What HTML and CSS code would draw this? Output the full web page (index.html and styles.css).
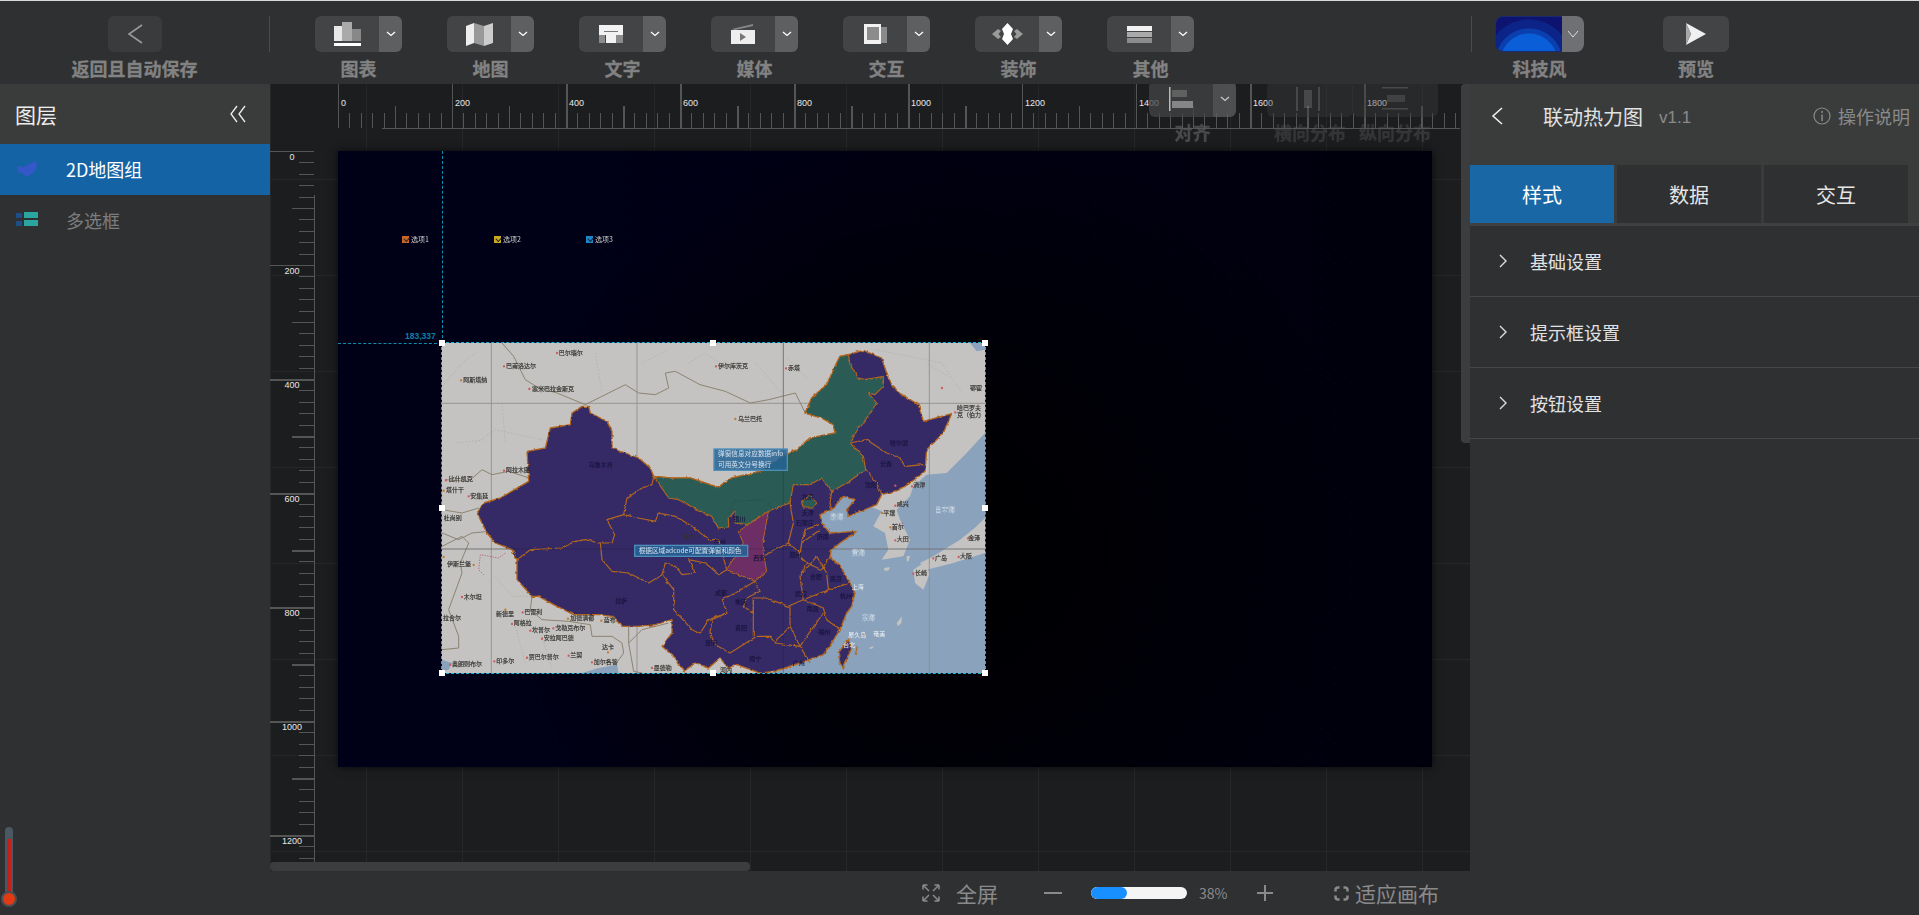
FILE: index.html
```html
<!DOCTYPE html>
<html lang="zh-CN">
<head>
  <meta charset="UTF-8">
  <title>联动热力图</title>
  <link rel="stylesheet" href="styles.css">
</head>
<body>

  <!-- top toolbar -->
  <header class="topbar">
    <div class="back-tool">
      <button class="tool-btn back-btn">
        <svg width="16" height="22" viewBox="0 0 16 22"><path d="M15 2 L2 11 L15 20" fill="none" stroke="#999" stroke-width="1.6"/></svg>
      </button>
      <span class="tool-label">返回且自动保存</span>
    </div>
    <div class="tool-sep"></div>
    <div class="tool-list">
      <div class="tool">
        <div class="split-btn">
          <span class="split-main">
            <svg width="27" height="24" viewBox="0 0 27 24"><rect x="0" y="4" width="8" height="15" fill="#e8e8e8"/><rect x="8" y="0" width="10" height="19" fill="#aaa"/><rect x="18" y="7" width="9" height="12" fill="#888"/><rect x="0" y="21" width="27" height="3" fill="#fff"/></svg>
          </span>
          <span class="split-caret"><svg class="caret" width="10" height="6" viewBox="0 0 10 6"><path d="M1 1 L5 4.5 L9 1" fill="none" stroke="#fff" stroke-width="1.3"/></svg></span>
        </div>
        <span class="tool-label">图表</span>
      </div>
      <div class="tool">
        <div class="split-btn">
          <span class="split-main">
            <svg width="27" height="23" viewBox="0 0 27 23"><path d="M0 3 L8 0 V20 L0 23 Z" fill="#eee"/><path d="M8 0 L18 3 V23 L8 20 Z" fill="#999"/><path d="M18 3 L27 0 V20 L18 23 Z" fill="#ccc"/></svg>
          </span>
          <span class="split-caret"><svg class="caret" width="10" height="6" viewBox="0 0 10 6"><path d="M1 1 L5 4.5 L9 1" fill="none" stroke="#fff" stroke-width="1.3"/></svg></span>
        </div>
        <span class="tool-label">地图</span>
      </div>
      <div class="tool">
        <div class="split-btn">
          <span class="split-main">
            <svg width="24" height="18" viewBox="0 0 24 18"><rect width="24" height="10" fill="#f2f2f2"/><rect y="10" width="6" height="8" fill="#8c8c8c"/><rect x="17" y="10" width="7" height="8" fill="#8c8c8c"/><rect x="5" y="6" width="14" height="1" fill="#777"/><rect x="7" y="7" width="10" height="11" fill="#f2f2f2"/></svg>
          </span>
          <span class="split-caret"><svg class="caret" width="10" height="6" viewBox="0 0 10 6"><path d="M1 1 L5 4.5 L9 1" fill="none" stroke="#fff" stroke-width="1.3"/></svg></span>
        </div>
        <span class="tool-label">文字</span>
      </div>
      <div class="tool">
        <div class="split-btn">
          <span class="split-main">
            <svg width="24" height="20" viewBox="0 0 24 20"><path d="M1 5 L22 0 V2 L4 6 Z" fill="#888"/><rect x="0" y="6" width="24" height="14" fill="#eee"/><path d="M9 9 L15 13 L9 17 Z" fill="#777"/></svg>
          </span>
          <span class="split-caret"><svg class="caret" width="10" height="6" viewBox="0 0 10 6"><path d="M1 1 L5 4.5 L9 1" fill="none" stroke="#fff" stroke-width="1.3"/></svg></span>
        </div>
        <span class="tool-label">媒体</span>
      </div>
      <div class="tool">
        <div class="split-btn">
          <span class="split-main">
            <svg width="23" height="20" viewBox="0 0 23 20"><rect x="8" y="3" width="15" height="16" fill="#8a8a8a"/><rect x="0" y="0" width="17" height="20" fill="#f2f2f2"/><rect x="3" y="3" width="12" height="13" fill="#8c8c8c"/></svg>
          </span>
          <span class="split-caret"><svg class="caret" width="10" height="6" viewBox="0 0 10 6"><path d="M1 1 L5 4.5 L9 1" fill="none" stroke="#fff" stroke-width="1.3"/></svg></span>
        </div>
        <span class="tool-label">交互</span>
      </div>
      <div class="tool">
        <div class="split-btn">
          <span class="split-main">
            <svg width="31" height="22" viewBox="0 0 31 22"><path d="M15.500 0 L21 6 L19 11 L21 16 L15.500 22 L10 16 L12 11 L10 6 Z" fill="#fff"/><path d="M6 6 L9 8 L6.500 11 L9 14 L6 16 L0 11 Z" fill="#9a9a9a"/><path d="M25 6 L22 8 L24.500 11 L22 14 L25 16 L31 11 Z" fill="#9a9a9a"/></svg>
          </span>
          <span class="split-caret"><svg class="caret" width="10" height="6" viewBox="0 0 10 6"><path d="M1 1 L5 4.5 L9 1" fill="none" stroke="#fff" stroke-width="1.3"/></svg></span>
        </div>
        <span class="tool-label">装饰</span>
      </div>
      <div class="tool">
        <div class="split-btn">
          <span class="split-main">
            <svg width="25" height="17" viewBox="0 0 25 17"><rect width="25" height="5" fill="#f2f2f2"/><rect y="6" width="25" height="5" fill="#aaa"/><rect y="12" width="25" height="5" fill="#8c8c8c"/></svg>
          </span>
          <span class="split-caret"><svg class="caret" width="10" height="6" viewBox="0 0 10 6"><path d="M1 1 L5 4.5 L9 1" fill="none" stroke="#fff" stroke-width="1.3"/></svg></span>
        </div>
        <span class="tool-label">其他</span>
      </div>
    </div>
    <div class="tool-sep right-sep"></div>
    <div class="tool theme-tool">
      <div class="theme-btn">
        <span class="theme-thumb"></span>
        <span class="theme-caret"><svg width="12" height="8" viewBox="0 0 12 8"><path d="M1 1 L6 7 L11 1" fill="none" stroke="#ddd" stroke-width="1"/></svg></span>
      </div>
      <span class="tool-label">科技风</span>
    </div>
    <div class="tool preview-tool">
      <button class="tool-btn preview-btn">
        <svg width="20" height="22" viewBox="0 0 20 22"><path d="M0 0 L20 11 L0 22 L5 11 Z" fill="#f0f0f0"/><path d="M0 0 L5 11 L0 22 Z" fill="#a8a8a8"/></svg>
      </button>
      <span class="tool-label">预览</span>
    </div>
  </header>

  <div class="workspace">

    <!-- layers -->
    <aside class="layers">
      <div class="layers-head">
        <span>图层</span>
        <svg width="18" height="18" viewBox="0 0 18 18"><path d="M8 1 L2 9 L8 17 M16 1 L10 9 L16 17" fill="none" stroke="#eee" stroke-width="1.3"/></svg>
      </div>
      <div class="layer-row active">
        <svg class="layer-icon" width="22" height="16" viewBox="0 0 22 16"><path d="M1 5 L8 6 L13 3 L20 0 L21 6 L17 12 L11 16 L6 12 L2 11 Z" fill="#3558c8"/></svg>
        <span>2D地图组</span>
      </div>
      <div class="layer-row">
        <svg class="layer-icon" width="22" height="15" viewBox="0 0 22 15"><rect y="1" width="6" height="5" fill="#1d4f86"/><rect y="9" width="6" height="5" fill="#1d4f86"/><rect x="8" y="0" width="14" height="6" fill="#2aa5a0"/><rect x="8" y="8" width="14" height="6" fill="#2aa5a0"/></svg>
        <span>多选框</span>
      </div>
      <div class="thermo"><span class="thermo-tube"><i></i></span><span class="thermo-bulb"></span></div>
    </aside>

    <!-- canvas area -->
    <main class="center">
      <div class="stage">
        <div class="ruler-x">
          <div class="ruler-x-ticks"></div>
          <div class="ruler-x-labels">
            <span>0</span><span>200</span><span>400</span><span>600</span><span>800</span><span>1000</span><span>1200</span><span>1400</span><span>1600</span><span>1800</span>
          </div>
        </div>
        <div class="ruler-y">
          <span>0</span><span>200</span><span>400</span><span>600</span><span>800</span><span>1000</span><span>1200</span>
        </div>

        <div class="screen">
          <label class="chk chk-1"><i class="orange"></i>选项1</label>
          <label class="chk chk-2"><i class="yellow"></i>选项2</label>
          <label class="chk chk-3"><i class="blue"></i>选项3</label>
          <div class="guide-v"></div>
          <div class="guide-h"></div>
          <span class="guide-text">183,337</span>

          <div class="map-box">
            <svg class="map" viewBox="0 0 1629 990" preserveAspectRatio="none">
              <defs>
                <filter id="rough" x="0" y="0" width="100%" height="100%">
                  <feTurbulence type="fractalNoise" baseFrequency="0.07" numOctaves="2" seed="4"/>
                  <feDisplacementMap in="SourceGraphic" scale="9" xChannelSelector="R" yChannelSelector="G"/>
                </filter>
              </defs>
              <rect width="1629" height="990" fill="#c4c3c1"/>
              <path class="faint" d="M0 130 L60 60 L100 30 M100 300 L160 260 L300 290 M180 180 L190 300 M600 60 L680 20 M460 30 L480 150 M740 60 L790 30 L830 60 M940 60 L1020 150 M1300 20 L1500 60 L1560 150 M1450 60 L1520 100 M40 300 L130 290 M1100 110 L1030 40 M160 700 L210 760 L290 760 M220 850 L250 960 M300 880 L330 980"/>
              <!-- sea -->
              <path class="sea" d="M1629 270 L1574 330 L1514 390 L1454 395 L1414 430 L1320 460 L1200 460 L1134 515 L1164 640 L1224 720 L1144 935 L1000 985 L990 990 L1629 990 Z"/>
              <path class="sea" d="M1584 0 L1629 0 L1629 20 L1604 25 Z"/>
              <path class="sea" d="M0 950 L30 960 L20 980 L0 985 Z"/>
              <path class="sea" d="M420 990 L470 975 L525 965 L530 990 Z"/>
              <!-- korea and japan -->
              <path class="land" d="M1414 430 L1374 440 L1319 460 L1284 490 L1319 505 L1294 550 L1329 570 L1339 620 L1319 650 L1384 640 L1404 590 L1374 530 L1364 500 L1404 460 Z"/>
              <path class="land" d="M1629 525 L1604 550 L1554 590 L1474 640 L1434 660 L1454 680 L1534 660 L1629 630 Z"/>
              <path class="land" d="M1414 680 L1444 660 L1464 690 L1444 740 L1419 720 Z"/>
              <path class="land" d="M1394 640 L1404 638 L1400 655 L1394 655 Z M1326 675 L1344 672 L1340 682 L1328 684 Z M1364 840 L1380 820 L1378 840 L1368 850 Z M1280 915 L1296 908 L1290 918 Z"/>
              <!-- grid -->
              <path class="grat" d="M0 181 H1629 M0 618 H1629 M148 0 V990 M585 0 V990 M1024 0 V990 M1462 0 V990"/>
              <!-- borders outside china -->
              <path class="border" d="M180 0 L215 40 L250 110 L290 135 L345 150 L430 185 L550 125 L590 150 L640 155 L680 135 L670 90 L700 85 L774 125 L850 145 L925 180 L980 170 L1060 150 L1090 210"/>
              <path class="border" d="M10 410 L80 415 L120 380 L150 395 L200 385 L262 405 M0 500 L60 510 L110 495 M0 570 L50 590 L90 570 L140 565 M0 610 L60 580 L80 600 L55 660 L60 690 L20 800 L50 880 L50 915 L0 920"/>
              <path class="border" d="M270 760 L265 800 L300 830 L380 835 L445 845 L450 880 L510 880 L540 900 L545 930 L520 965 M560 850 L560 900 L600 860 L680 840 M560 900 L575 985 L600 990 M725 985 L730 990"/>
              <path class="pinkline" d="M190 630 L170 645 L115 635 L110 680 L125 695 M1347 560 L1360 545 L1385 540"/>
              <!-- china -->
              <g filter="url(#rough)">
                <path class="china" d="M420 190 L440 190 L445 210 L495 235 L510 265 L510 315 L590 345 L625 375 L635 400 L690 405 L745 405 L820 430 L829 432 L869 405 L954 385 L1024 340 L1064 320 L1104 285 L1179 270 L1174 245 L1139 225 L1089 210 L1109 165 L1154 125 L1184 60 L1194 40 L1219 35 L1264 22 L1319 45 L1339 105 L1364 145 L1429 185 L1444 235 L1529 212 L1504 270 L1454 320 L1449 385 L1404 420 L1374 440 L1319 455 L1304 485 L1244 510 L1219 520 L1214 500 L1239 470 L1204 460 L1169 500 L1134 515 L1139 540 L1164 570 L1244 565 L1194 600 L1169 620 L1164 640 L1194 670 L1224 720 L1239 750 L1229 790 L1214 810 L1194 860 L1169 900 L1144 935 L1074 960 L999 985 L954 990 L884 965 L859 975 L834 945 L800 975 L760 960 L725 985 L700 945 L660 910 L690 870 L690 830 L640 845 L590 850 L540 850 L510 820 L470 815 L395 815 L335 785 L290 760 L270 760 L225 710 L225 650 L210 620 L160 600 L135 570 L105 510 L125 480 L175 465 L260 415 L255 325 L310 315 L325 255 L385 245 L390 210 Z"/>
                <path class="green" d="M635 400 L690 405 L745 405 L820 430 L829 432 L869 405 L954 385 L1024 340 L1064 320 L1104 285 L1179 270 L1174 245 L1139 225 L1089 210 L1109 165 L1154 125 L1184 60 L1194 40 L1219 35 L1224 65 L1249 105 L1271 110 L1324 100 L1324 130 L1299 155 L1279 150 L1304 180 L1264 240 L1244 265 L1224 300 L1264 340 L1271 380 L1214 420 L1169 445 L1139 405 L1104 425 L1054 425 L1044 480 L989 500 L914 545 L879 540 L879 505 L859 525 L860 552 L829 555 L809 520 L774 505 L710 470 L680 465 Z"/>
                <path class="green" d="M1104 455 L1124 480 L1114 495 L1084 495 L1079 475 Z"/>
                <path class="shaanxi" d="M979 505 L964 590 L964 630 L974 685 L939 715 L854 680 L879 640 L904 600 L889 565 L919 545 Z"/>
                <path class="prov" d="M635 400 L630 425 L600 435 L555 465 L545 515 L495 530 L518 575 L510 600 L470 600 L430 590 L400 595 L360 615 L265 620 L225 650"/>
                <path class="prov" d="M545 515 L590 525 L640 535 L650 510 L700 520 L750 550 L800 590 L830 590 L854 680"/>
                <path class="prov" d="M475 600 L480 650 L510 685 L560 690 L620 720 L660 695 L670 660 L700 670 L720 695 L760 690 L740 650 L790 660 L830 695 L854 680"/>
                <path class="prov" d="M660 695 L695 740 L695 800 L750 860 L775 870 L800 830 L855 810 L840 770 L880 750 L939 715"/>
                <path class="prov" d="M855 810 L810 830 L804 870 L820 905 L864 930 L944 880 L984 880 L999 900 L1074 910 L1104 960"/>
                <path class="prov" d="M939 715 L954 745 L914 765 L904 790 L934 810 L934 765 L974 765 L1039 790 L1084 770 L1074 700 L1094 660 L1139 680 L1164 640"/>
                <path class="prov" d="M964 640 L1039 600 L1074 630 L1079 600 L1134 560 M1044 480 L1054 540 L1039 600 M1079 600 L1089 560 L1134 545 M1094 660 L1074 640 L1079 600"/>
                <path class="prov" d="M1169 445 L1164 480 L1169 500 M1271 380 L1304 420 L1319 455 M1224 300 L1274 290 L1334 330 L1374 345 L1389 370 L1444 365"/>
                <path class="prov" d="M1044 790 L1044 850 L1004 890 L999 900 M1084 770 L1144 795 L1154 830 L1194 860 M1044 850 L1074 910 L1094 880 L1144 810 M934 765 L934 880 M1074 700 L1124 640 L1154 690 L1159 740 L1224 720 M1084 770 L1159 740"/>
                <path class="prov-thin" d="M874 475 L960 470 L989 490 L985 510 M874 475 L860 525"/>
                <!-- taiwan -->
                <path class="china" d="M1219 890 L1189 930 L1194 960 L1204 975 L1229 915 Z"/>
                <path class="prov" d="M1246 910 L1240 935"/>
              </g>
              <path class="grat-over" d="M0 618 H1629 M1024 0 V990"/>
              <!-- city dots -->
              <path class="dots" d="M345 30h0 M186 70h0 M262 138h0 M186 383h0 M12 412h0 M80 460h0 M242 808h0 M210 843h0 M265 863h0 M334 856h0 M300 887h0 M380 938h0 M255 944h0 M157 955h0 M25 965h0 M450 958h0 M630 975h0 M60 762h0 M822 70h0 M1032 76h0 M1360 428h0 M1500 135h0 M1540 208h0 M1410 430h0 M1360 488h0 M1360 592h0 M1578 586h0 M1474 646h0 M1550 642h0 M1414 692h0"/>
              <path class="dots-o" d="M57 112h0 M5 443h0 M95 666h0 M5 642h0 M190 800h0 M378 827h0 M478 833h0 M498 928h0 M880 228h0 M1320 510h0 M1345 553h0 M1265 877h0"/>
              <!-- place names -->
              <g class="m">
                <text x="350" y="35">巴尔瑙尔</text><text x="192" y="75">巴甫洛达尔</text><text x="64" y="117">阿斯塔纳</text><text x="270" y="143">塞米巴拉金斯克</text><text x="828" y="75">伊尔库茨克</text><text x="1038" y="82">赤塔</text><text x="888" y="233">乌兰巴托</text><text x="1584" y="140">鄂霍</text><text x="1545" y="202">哈巴罗夫</text><text x="1545" y="222">克（伯力</text><text x="192" y="387">阿拉木图</text><text x="20" y="415">比什凯克</text><text x="12" y="448">塔什干</text><text x="85" y="464">安集延</text><text x="5" y="532">杜尚别</text><text x="15" y="670">伊斯兰堡</text><text x="65" y="767">木尔坦</text><text x="3" y="832">拉合尔</text><text x="162" y="820">新德里</text><text x="247" y="813">巴雷利</text><text x="215" y="847">阿格拉</text><text x="270" y="868">坎普尔</text><text x="340" y="860">戈勒克布尔</text><text x="305" y="892">安拉阿巴德</text><text x="385" y="832">加德满都</text><text x="485" y="838">蓝布</text><text x="480" y="918">达卡</text><text x="385" y="943">兰契</text><text x="260" y="948">贾巴尔普尔</text><text x="163" y="960">印多尔</text><text x="30" y="970">奥朗则布尔</text><text x="455" y="963">加尔各答</text><text x="635" y="980">曼德勒</text><text x="722" y="588">西宁</text><text x="834" y="986">河内</text><text x="1414" y="433">清津</text><text x="1364" y="490">咸兴</text><text x="1324" y="516">平壤</text><text x="1349" y="558">首尔</text><text x="1364" y="595">大田</text><text x="1579" y="592">金泽</text><text x="1479" y="650">广岛</text><text x="1554" y="646">大阪</text><text x="1419" y="697">长崎</text>
              </g>
              <g class="d">
                <text x="440" y="372">乌鲁木齐</text><text x="520" y="780">拉萨</text><text x="815" y="603">兰州</text><text x="1344" y="305">哈尔滨</text><text x="1314" y="370">长春</text><text x="1269" y="433">沈阳</text><text x="1079" y="468">北京</text><text x="1079" y="515">天津</text><text x="1062" y="546">石家庄</text><text x="1124" y="587">济南</text><text x="1042" y="642">郑州</text><text x="934" y="652">西安</text><text x="874" y="533">银川</text><text x="1104" y="708">合肥</text><text x="1164" y="715">南京</text><text x="1194" y="765">杭州</text><text x="1059" y="758">武汉</text><text x="819" y="757">成都</text><text x="879" y="783">重庆</text><text x="1094" y="805">南昌</text><text x="879" y="860">贵阳</text><text x="1129" y="873">福州</text><text x="789" y="905">昆明</text><text x="922" y="955">南宁</text><text x="1052" y="967">广州</text>
              </g>
              <g class="w">
                <text x="1229" y="738">上海</text><text x="1204" y="913">台北</text><text x="1219" y="882">屋久岛</text><text x="1294" y="878">奄美</text>
              </g>
              <g class="sea-name">
                <text x="1479" y="506">日本海</text><text x="1164" y="527">渤海</text><text x="1229" y="637">黄海</text><text x="1259" y="832">东海</text>
              </g>
              <!-- tooltips -->
              <rect class="tip" x="816" y="318" width="220" height="64"/>
              <text class="tip-text" x="828" y="340">弹窗信息对应数据info</text>
              <text class="tip-text" x="828" y="372">可用英文分号换行</text>
              <rect class="tip" x="578" y="607" width="339" height="33"/>
              <text class="tip-text" x="590" y="630">根据区域adcode可配置弹窗和颜色</text>
            </svg>
            <span class="handle tl"></span><span class="handle tc"></span><span class="handle tr"></span>
            <span class="handle ml"></span><span class="handle mr"></span>
            <span class="handle bl"></span><span class="handle bc"></span><span class="handle br"></span>
          </div>
        </div>

        <!-- align buttons sit on top of the ruler -->
        <div class="float-tool align-tool">
          <div class="split-btn">
            <span class="split-main">
              <svg width="24" height="24" viewBox="0 0 24 24"><rect width="1.500" height="24" fill="#eee"/><rect x="3" y="3" width="15" height="7" fill="#777"/><rect x="3" y="14" width="21" height="7" fill="#aaa"/></svg>
            </span>
            <span class="split-caret"><svg class="caret" width="10" height="6" viewBox="0 0 10 6"><path d="M1 1 L5 4.5 L9 1" fill="none" stroke="#fff" stroke-width="1.3"/></svg></span>
          </div>
          <span class="float-label">对齐</span>
        </div>
        <div class="float-tool dist-x">
          <div class="dist-btn">
            <svg width="28" height="24" viewBox="0 0 28 24"><rect x="0" y="0" width="2" height="24" fill="#888"/><rect x="8" y="3" width="8" height="18" fill="#888"/><rect x="22" y="0" width="2" height="24" fill="#888"/></svg>
          </div>
          <span class="float-label">横向分布</span>
        </div>
        <div class="float-tool dist-y">
          <div class="dist-btn">
            <svg width="26" height="24" viewBox="0 0 26 24"><rect y="0" width="26" height="1.500" fill="#888"/><rect x="5" y="8" width="18" height="7" fill="#777"/><rect y="21" width="26" height="1.500" fill="#888"/></svg>
          </div>
          <span class="float-label">纵向分布</span>
        </div>

        <div class="scroll-x"></div>
        <div class="scroll-y"></div>
      </div>

      <footer class="zoombar">
        <svg class="zoom-full" width="18" height="18" viewBox="0 0 18 18"><path d="M1 1 L7 7 M1 1 H5.500 M1 1 V5.500 M17 1 L11 7 M17 1 H12.500 M17 1 V5.500 M1 17 L7 11 M1 17 H5.500 M1 17 V12.500 M17 17 L11 11 M17 17 H12.500 M17 17 V12.500" fill="none" stroke="#8a8a8a" stroke-width="1.500"/></svg>
        <span class="zoom-text full-text">全屏</span>
        <span class="zoom-minus"></span>
        <div class="zoom-slider"><div class="zoom-fill" style="width: 38%"></div></div>
        <span class="zoom-pct">38%</span>
        <span class="zoom-plus"></span>
        <svg class="zoom-fit" width="15" height="15" viewBox="0 0 15 15"><path d="M1.500 5.500 V4 Q1.500 1.500 4 1.500 H5.500 M9.500 1.500 H11 Q13.500 1.500 13.500 4 V5.500 M13.500 9.500 V11 Q13.500 13.500 11 13.500 H9.500 M5.500 13.500 H4 Q1.500 13.500 1.500 11 V9.500" fill="none" stroke="#8a8a8a" stroke-width="2.500"/></svg>
        <span class="zoom-text">适应画布</span>
      </footer>
    </main>

    <!-- settings -->
    <aside class="props">
      <div class="props-head">
        <svg width="14" height="20" viewBox="0 0 14 20"><path d="M12 2 L3 10 L12 18" fill="none" stroke="#eee" stroke-width="1.600"/></svg>
        <span class="props-title">联动热力图</span>
        <span class="props-ver">v1.1</span>
        <span class="props-help">
          <svg width="18" height="18" viewBox="0 0 18 18"><circle cx="9" cy="9" r="8" fill="none" stroke="#888" stroke-width="1.200"/><rect x="8.300" y="4" width="1.500" height="2" fill="#888"/><rect x="8.300" y="7.500" width="1.500" height="6.500" fill="#888"/></svg>
          操作说明
        </span>
      </div>
      <div class="tabs">
        <span class="tab active">样式</span>
        <span class="tab">数据</span>
        <span class="tab">交互</span>
      </div>
      <div class="acc-row"><svg width="10" height="16" viewBox="0 0 10 16"><path d="M2 2 L8 8 L2 14" fill="none" stroke="#ddd" stroke-width="1.400"/></svg>基础设置</div>
      <div class="acc-row"><svg width="10" height="16" viewBox="0 0 10 16"><path d="M2 2 L8 8 L2 14" fill="none" stroke="#ddd" stroke-width="1.400"/></svg>提示框设置</div>
      <div class="acc-row"><svg width="10" height="16" viewBox="0 0 10 16"><path d="M2 2 L8 8 L2 14" fill="none" stroke="#ddd" stroke-width="1.400"/></svg>按钮设置</div>
    </aside>
  </div>

</body>
</html>
```

FILE: styles.css
```css
* {
  margin: 0;
  padding: 0;
  box-sizing: border-box;
}
html, body {
  height: 100%;
  overflow: hidden;
  font-family: "Noto Sans CJK SC", "Liberation Sans", sans-serif;
  background: #2f3032;
}
body {
  display: flex;
  flex-direction: column;
}

/* top toolbar */
.topbar {
  height: 84px;
  flex: none;
  display: flex;
  padding-top: 15px;
  border-top: 1px solid #d8d8d8;
  background: #2f3032;
}
.back-tool {
  width: 269px;
  display: flex;
  flex-direction: column;
  align-items: center;
}
.tool-btn {
  height: 36px;
  border: none;
  border-radius: 6px;
  display: flex;
  align-items: center;
  justify-content: center;
}
.back-btn {
  width: 54px;
  background: #3a3b3c;
}
.tool-label {
  height: 32px;
  line-height: 32px;
  font-size: 18px;
  font-weight: 700;
  color: #828282;
  -webkit-text-stroke: 0.3px #828282;
  white-space: nowrap;
}
.tool-sep {
  width: 1px;
  height: 36px;
  background: #4a4b4d;
}
.tool-list {
  display: flex;
  gap: 45px;
  margin-left: 45px;
}
.tool {
  display: flex;
  flex-direction: column;
  align-items: center;
}
.split-btn {
  width: 87px;
  height: 36px;
  display: flex;
  border-radius: 6px;
  overflow: hidden;
}
.split-main {
  width: 64px;
  background: #434445;
  display: flex;
  align-items: center;
  justify-content: center;
}
.split-caret {
  width: 23px;
  background: #5e5f60;
  display: flex;
  align-items: center;
  justify-content: center;
}
.right-sep {
  margin-left: 277px;
}
.theme-tool {
  margin-left: 23px;
}
.theme-btn {
  width: 89px;
  height: 36px;
  display: flex;
  border-radius: 8px;
  overflow: hidden;
}
.theme-thumb {
  width: 67px;
  border: 1px solid #1b2a70;
  border-right: none;
  border-radius: 8px 0 0 8px;
  background:
    radial-gradient(circle at 50% 45px, #0a5fd8 0 28px, #0a3fae 29px 33px, #0c2488 34px 42px, transparent 43px),
    #0c1470;
}
.theme-caret {
  width: 22px;
  background: #6f7073;
  display: flex;
  align-items: center;
  justify-content: center;
}
.preview-tool {
  margin-left: 79px;
}
.preview-btn {
  width: 66px;
  background: #434445;
}

/* workspace */
.workspace {
  flex: 1;
  display: flex;
  min-height: 0;
}

/* layers */
.layers {
  width: 270px;
  flex: none;
  position: relative;
  background: #2f3032;
}
.layers-head {
  height: 60px;
  padding: 0 23px 0 15px;
  display: flex;
  align-items: center;
  justify-content: space-between;
  background: #3a3c3c;
  color: #eee;
  font-size: 21px;
}
.layer-row {
  height: 51px;
  display: flex;
  align-items: center;
  padding: 0 0 2px 16px;
  font-size: 18px;
  color: #7d7d7d;
}
.layer-row.active {
  background: #1464a5;
  color: #fff;
}
.layer-icon {
  width: 22px;
  margin-right: 28px;
}
.thermo {
  position: absolute;
  left: 1px;
  top: 743px;
  width: 16px;
  display: flex;
  flex-direction: column;
  align-items: center;
}
.thermo-tube {
  width: 8px;
  height: 68px;
  margin-bottom: -4px;
  padding: 12px 2px 0;
  border-radius: 4px 4px 0 0;
  background: #4a5862;
}
.thermo-tube i {
  display: block;
  height: 100%;
  background: #c4201a;
}
.thermo-bulb {
  width: 16px;
  height: 16px;
  border-radius: 50%;
  border: 2px solid #4a4f55;
  background: #e23a12;
  z-index: 1;
}

/* canvas area */
.center {
  flex: 1;
  min-width: 0;
  display: flex;
  flex-direction: column;
}
.stage {
  flex: 1;
  position: relative;
  overflow: hidden;
  background-color: #1c1d1f;
  background-image:
    linear-gradient(90deg, #25272a 1px, transparent 1px),
    linear-gradient(#25272a 1px, transparent 1px);
  background-size: 96px 96px;
  background-position: 0 -1px;
}
.ruler-x {
  position: absolute;
  left: 68px;
  top: 0;
  right: 10px;
  height: 45px;
}
.ruler-x-ticks {
  position: absolute;
  inset: 0;
  background:
    linear-gradient(#555, #555) 44px 44px / 100% 1px no-repeat,
    repeating-linear-gradient(90deg, #555 0 1.500px, transparent 1.500px 114px) 0 0 / 100% 44px no-repeat,
    repeating-linear-gradient(90deg, transparent 0 57px, #555 57px 58.500px, transparent 58.500px 114px) 0 22px / 100% 22px no-repeat,
    repeating-linear-gradient(90deg, #555 0 1px, transparent 1px 11.400px) 0 29px / 100% 15px no-repeat;
}
.ruler-x-labels {
  position: relative;
  display: flex;
  padding-top: 13px;
}
.ruler-x-labels span {
  width: 114px;
  flex: none;
  padding-left: 3px;
  font: 9px/12px "Liberation Sans", sans-serif;
  color: #e8e8e8;
}
.ruler-y {
  position: absolute;
  left: 0;
  top: 67px;
  bottom: 9px;
  width: 45px;
  overflow: hidden;
  display: flex;
  flex-direction: column;
  background:
    linear-gradient(#555, #555) 44px 44px / 1px 100% no-repeat,
    repeating-linear-gradient(#555 0 1.500px, transparent 1.500px 114px) 0 0 / 44px 100% no-repeat,
    repeating-linear-gradient(transparent 0 57px, #555 57px 58.500px, transparent 58.500px 114px) 22px 0 / 22px 100% no-repeat,
    repeating-linear-gradient(#555 0 1px, transparent 1px 11.400px) 29px 0 / 15px 100% no-repeat;
}
.ruler-y span {
  height: 114px;
  flex: none;
  padding-top: 1px;
  width: 44px;
  text-align: center;
  font: 9px/10px "Liberation Sans", sans-serif;
  color: #e8e8e8;
}

/* big screen */
.screen {
  position: absolute;
  left: 68px;
  top: 67px;
  width: 1094px;
  height: 616px;
  box-shadow: 0 0 8px rgba(0, 0, 0, 0.7);
  background:
    radial-gradient(circle at 55% 65%, rgba(0, 0, 0, 0.95) 0, rgba(0, 0, 0, 0.7) 25%, transparent 60%),
    radial-gradient(#08082c 0.6px, transparent 1px) 0 0 / 15px 15px,
    linear-gradient(90deg, #000018, #000012 60%, #00000c);
}
.chk {
  position: absolute;
  top: 84px;
  display: flex;
  align-items: center;
  gap: 2px;
  font-size: 7px;
  line-height: 8px;
  color: #cfcfcf;
  filter: blur(0.25px);
}
.chk i {
  position: relative;
  width: 7px;
  height: 7px;
}
.chk i::after {
  content: "";
  position: absolute;
  left: 1.500px;
  top: 1px;
  width: 4px;
  height: 2.500px;
  border-left: 1px solid #222;
  border-bottom: 1px solid #222;
  transform: rotate(-45deg);
}
.chk-1 { left: 64px; }
.chk-2 { left: 156px; }
.chk-3 { left: 248px; }
.orange { background: #c8642a; }
.yellow { background: #c8a81e; }
.blue { background: #1a86cc; }
.guide-v {
  position: absolute;
  left: 104px;
  top: 0;
  height: 192px;
  border-left: 1px dashed #0a8fb0;
}
.guide-h {
  position: absolute;
  left: 0;
  top: 192px;
  width: 104px;
  border-top: 1px dashed #0a8fb0;
}
.guide-text {
  position: absolute;
  left: 67px;
  top: 179px;
  font: 700 8.500px/12px "Liberation Sans", sans-serif;
  color: #0e7fa5;
}
.map-box {
  position: absolute;
  left: 104px;
  top: 192px;
  width: 543px;
  height: 330px;
  outline: 1px dashed #17b4d8;
}
.map {
  display: block;
  width: 100%;
  height: 100%;
  filter: blur(0.4px);
}
.sea { fill: #8aa2bc; }
.land { fill: #c4c3c1; }
.grat { fill: none; stroke: #8f8c89; stroke-width: 2.500; }
.grat-over { fill: none; stroke: rgba(20, 20, 40, 0.25); stroke-width: 2.500; }
.border { fill: none; stroke: #8d8372; stroke-width: 3; }
.faint { fill: none; stroke: #aeaca7; stroke-width: 2; stroke-dasharray: 5 5; }
.pinkline { fill: none; stroke: #b0557a; stroke-width: 2.500; stroke-dasharray: 4 4; }
.china { fill: #352c66; stroke: #b3661f; stroke-width: 4; stroke-linejoin: round; }
.green { fill: #2a5c55; stroke: #b3661f; stroke-width: 3.500; stroke-linejoin: round; }
.shaanxi { fill: #6d2f66; stroke: #b3661f; stroke-width: 3; }
.prov { fill: none; stroke: #b3661f; stroke-width: 3.500; stroke-linejoin: round; }
.prov-thin { fill: none; stroke: #24504a; stroke-width: 2; }
.dots { fill: none; stroke: #cf5a5f; stroke-width: 7; stroke-linecap: round; }
.dots-o { fill: none; stroke: #c47a2c; stroke-width: 7; stroke-linecap: round; }
.map text {
  font-family: "Noto Sans CJK SC", sans-serif;
  font-size: 18px;
}
.m { fill: #33322f; stroke: #33322f; stroke-width: 0.5px; }
.d { fill: #1a1540; stroke: #1a1540; stroke-width: 0.5px; }
.w { fill: #eef2f6; }
.sea-name { fill: #2d5a86; stroke: #dfe8f0; stroke-width: 0.8px; }
.map .sea-name text { font-size: 20px; }
.tip {
  fill: rgba(38, 100, 150, 0.85);
  stroke: #4d8db8;
  stroke-width: 4;
}
.map .tip-text {
  fill: #d5e2ee;
  font-size: 20px;
}
.handle {
  position: absolute;
  width: 6px;
  height: 6px;
  background: #fff;
}
.tl { left: -3px; top: -3px; }
.tc { left: 268px; top: -3px; }
.tr { right: -3px; top: -3px; }
.ml { left: -3px; top: 162px; }
.mr { right: -3px; top: 162px; }
.bl { left: -3px; bottom: -3px; }
.bc { left: 268px; bottom: -3px; }
.br { right: -3px; bottom: -3px; }

/* align tools over the ruler */
.float-tool {
  position: absolute;
  top: -3px;
  display: flex;
  flex-direction: column;
  align-items: center;
  opacity: 0.75;
}
.align-tool { left: 879px; }
.dist-x { left: 997px; width: 86px; opacity: 0.4; }
.dist-y { left: 1082px; width: 86px; opacity: 0.4; }
.dist-btn {
  width: 86px;
  height: 36px;
  border-radius: 6px;
  background: #3a3b3c;
  display: flex;
  align-items: center;
  justify-content: center;
}
.float-label {
  height: 31px;
  line-height: 31px;
  font-size: 18px;
  font-weight: 700;
  color: #5a5a5a;
  -webkit-text-stroke: 0.3px #5a5a5a;
  white-space: nowrap;
}
.scroll-x {
  position: absolute;
  left: 0;
  bottom: 0;
  width: 480px;
  height: 9px;
  border-radius: 4px;
  background: #3c3d3f;
}
.scroll-y {
  position: absolute;
  right: 0;
  top: 0;
  width: 9px;
  height: 359px;
  border-radius: 4px 0 0 4px;
  background: #3c3d3f;
}

/* zoom bar */
.zoombar {
  height: 44px;
  flex: none;
  display: flex;
  align-items: center;
  padding-left: 652px;
  background: #2f3032;
}
.zoom-text {
  font-size: 21px;
  color: #8a8a8a;
  white-space: nowrap;
}
.full-text {
  margin-left: 16px;
}
.zoom-minus {
  width: 18px;
  height: 2px;
  margin-left: 46px;
  background: #8a8a8a;
}
.zoom-slider {
  width: 96px;
  height: 12px;
  margin-left: 29px;
  border-radius: 6px;
  overflow: hidden;
  background: #f5f5f5;
}
.zoom-fill {
  height: 100%;
  border-radius: 6px;
  background: #1890ff;
}
.zoom-pct {
  width: 30px;
  margin-left: 12px;
  font-size: 14px;
  color: #8a8a8a;
}
.zoom-plus {
  width: 16px;
  height: 16px;
  margin-left: 28px;
  background:
    linear-gradient(#8a8a8a, #8a8a8a) center / 100% 2px no-repeat,
    linear-gradient(#8a8a8a, #8a8a8a) center / 2px 100% no-repeat;
}
.zoom-fit {
  margin-left: 61px;
  margin-right: 6px;
}

/* settings panel */
.props {
  width: 449px;
  flex: none;
  background: #2f3032;
}
.props-head {
  height: 81px;
  padding: 0 9px 17px 20px;
  display: flex;
  align-items: center;
  background: #3a3c3c;
}
.props-title {
  margin-left: 39px;
  font-size: 20px;
  color: #e2e2e2;
}
.props-ver {
  margin-left: 16px;
  padding-top: 3px;
  font: 17px "Liberation Sans", sans-serif;
  color: #8a8a8a;
}
.props-help {
  margin-left: auto;
  display: flex;
  align-items: center;
  gap: 7px;
  font-size: 18px;
  color: #8a8a8a;
}
.tabs {
  height: 61px;
  display: flex;
  gap: 3px;
  padding-right: 11px;
  border-bottom: 3px solid #3e4042;
  background: #3a3c3c;
}
.tab {
  flex: 1;
  display: flex;
  align-items: center;
  justify-content: center;
  font-size: 20px;
  color: #e6e6e6;
  background: #2f3032;
}
.tab.active {
  background: #1a67a6;
  color: #fff;
}
.acc-row {
  height: 71px;
  display: flex;
  align-items: center;
  gap: 22px;
  padding-left: 28px;
  border-bottom: 1px solid #464749;
  font-size: 18px;
  color: #e2e2e2;
}
```
